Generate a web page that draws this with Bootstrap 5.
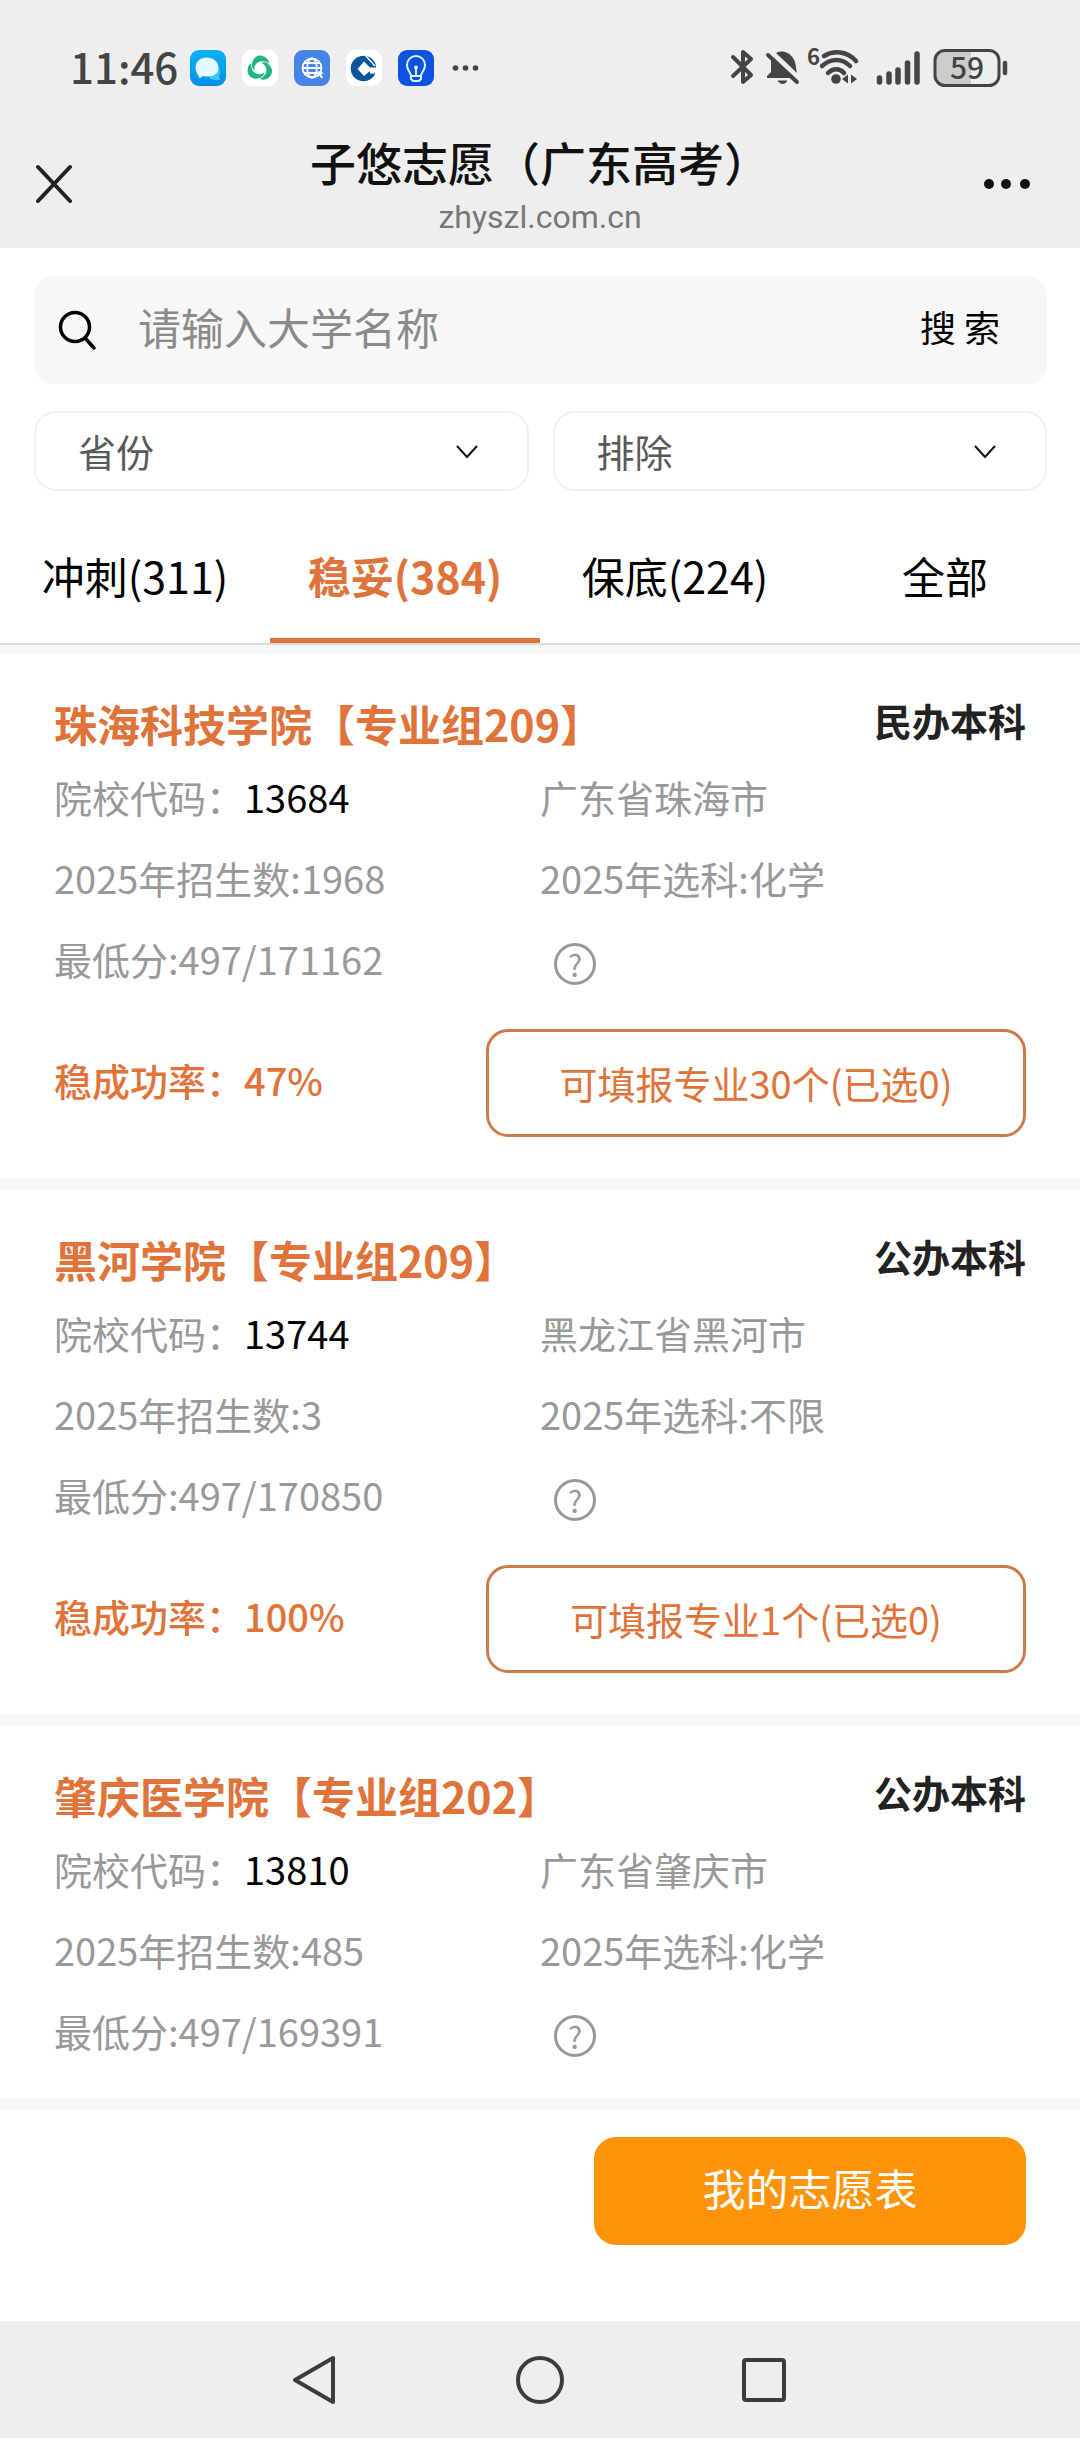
<!DOCTYPE html>
<html lang="zh-CN">
<head>
<meta charset="utf-8">
<meta name="viewport" content="width=device-width, initial-scale=1">
<title>子悠志愿（广东高考）</title>
<link rel="stylesheet" href="https://cdn.jsdelivr.net/npm/bootstrap@5.3.0/dist/css/bootstrap.min.css">
<style>
:root{--brand:#e0733a;--ink:#111;--muted:#999;--strip:#f7f7f7;--chrome:#eee}
body{font-family:"Noto Sans CJK SC","Noto Sans",sans-serif;font-size:38px;color:#000;background:#fff}
svg{display:block;flex:none}
/* phone status bar */
.chrome{background:var(--chrome)}
.statusbar{height:136px;padding:0 70px;color:#444}
.clock{font-size:42px;line-height:60px;padding-bottom:4px;font-weight:500}
.apps{gap:16px;margin-left:12px}
/* page title bar */
.titlebar{height:112px;padding:0 36px}
.page-title{font-size:46px;line-height:50px;font-weight:500;color:var(--ink)}
.page-host{font-size:32px;line-height:62px;color:#777;font-family:Roboto,"Noto Sans CJK SC",sans-serif}
.icon-btn{border:0;background:none;padding:0}
.side{width:60px}
/* search and filters */
.filters{padding:28px 33px 0 34px}
.searchbox{height:108px;border-radius:20px;background:var(--strip);padding:0 47px 0 24px}
.searchbox input{border:0;background:none;box-shadow:none;padding:0 0 8px 40px;font-size:43px;line-height:64px;color:#000}
.searchbox input:focus{background:none;box-shadow:none}
.searchbox input::placeholder{color:#8a8a8a;opacity:1}
.search-btn{font-size:36px;line-height:56px;padding-bottom:8px;color:#000}
.pickers{gap:24px;margin-top:27px}
.pickers .form-select{flex:1 1 0;height:80px;border:2px solid #f0f0f0;border-radius:22px;padding:0 80px 0 42px;font-size:38px;line-height:56px;color:#5a5a5a;
background-image:url("data:image/svg+xml,%3csvg xmlns='http://www.w3.org/2000/svg' viewBox='0 0 24 24'%3e%3cpath fill='none' stroke='%23111' stroke-width='2' d='M2 7l10 11 10-11'/%3e%3c/svg%3e");background-size:24px 24px;background-position:right 48px center}
/* tabs */
.level-tabs{height:154px;border-bottom:2px solid #ddd}
.level-tabs .nav-item{flex:1 1 0}
.level-tabs .nav-link{height:152px;padding:52px 0 0;font-size:43px;line-height:64px;color:#000;border-radius:0;border-bottom:5px solid transparent;white-space:nowrap}
.level-tabs .nav-link.active{color:var(--brand);font-weight:700;border-bottom-color:var(--brand)}
/* results */
.results{border-top:9px solid var(--strip)}
.school{padding:36px 54px 41px;border-bottom:12px solid var(--strip)}
.school-cut{padding-bottom:27px}
.school-name{font-size:43px;line-height:66px;font-weight:700;color:var(--brand);margin:0}
.school-kind{font-weight:700;color:#222;line-height:60px}
.fact{line-height:81px;color:var(--muted);white-space:nowrap}
.code{color:#000}
.help{width:42px;height:42px;margin:10px 0 0 14px;border:3px solid var(--muted);border-radius:50%;background:none;color:var(--muted);font-size:30px;line-height:36px;padding:0}
.actions{margin-top:30px}
.rate{color:var(--brand);font-weight:500;line-height:56px;padding-bottom:6px}
.pick-btn{width:540px;height:108px;border:3px solid #cd7a4c;border-radius:22px;color:var(--brand);font-size:38px;line-height:56px}
.school .row{--bs-gutter-x:0}
/* bottom */
.footer-actions{height:211px;padding:27px 54px 0}
.form-btn{width:432px;height:108px;border:0;border-radius:22px;background:#ff940a;color:#fff;font-size:43px;line-height:64px;padding:0 0 8px}
.sysnav{height:117px;gap:174px}
</style>
</head>
<body>
<header class="chrome">
  <div class="statusbar d-flex align-items-center justify-content-between">
    <div class="d-flex align-items-center">
      <span class="clock">11:46</span>
      <div class="apps d-flex align-items-center">
        <svg width="36" height="36" viewBox="0 0 36 36"><defs><linearGradient id="sky" x2="0" y2="1"><stop stop-color="#0ab0f5"/><stop offset="1" stop-color="#0091e8"/></linearGradient></defs><rect width="36" height="36" rx="9" fill="url(#sky)"/><path d="M24 24c3-1 5-4 4-8 3 4 2 8 1 10l1 4c-4 0-8 0-11-2z" fill="#3cc8fa"/><path d="M16.500 7.500C10 7.500 5.500 12 5.500 17.500c0 3 1 5 2 6.500l2 4c2 0 2-1 3-2 9 2 16-1 16-8.500 0-5.500-5-10-12-10z" fill="#e4f9ff"/></svg>
        <svg width="36" height="36" viewBox="0 0 36 36"><defs><path id="leaf" d="M10 13.500C11 7 17 4 22 6.500c3 1.500 5 4 5 7C23 10.500 18 10.500 15 13c-2 2-3 4-2.500 7.500C10 18.500 9.500 16 10 13.500z"/></defs><rect width="36" height="36" rx="9" fill="#fff"/><g fill="#24b47e"><use href="#leaf"/><use href="#leaf" transform="rotate(120 18 18.500)"/><use href="#leaf" transform="rotate(240 18 18.500)"/></g></svg>
        <svg width="36" height="36" viewBox="0 0 36 36"><rect width="36" height="36" rx="9" fill="#4584e6"/><g fill="none" stroke="#fff" stroke-width="1.800"><circle cx="18" cy="18" r="9.500"/><ellipse cx="18" cy="18" rx="4.800" ry="9.500"/><path d="M8.500 18h19M10 13h16M10 23h16"/></g><path d="M24 21l6 2-3 1.500 2 3-1.500 1-2-3-1.500 2z" fill="#fff"/></svg>
        <svg width="36" height="36" viewBox="0 0 36 36"><rect width="36" height="36" rx="9" fill="#fff"/><circle cx="17.500" cy="18.500" r="12.800" fill="#0b5597"/><path d="M18 11.500l6 6h11v3.500H24l-6 5-6.500-7z" fill="#fff"/><path d="M24 21h8l-1.500 2.500H24z" fill="#fff"/><path d="M19 5l10 11" stroke="#fff" stroke-width="1.400"/></svg>
        <svg width="36" height="36" viewBox="0 0 36 36"><rect width="36" height="36" rx="9" fill="#0d52e0"/><g fill="none" stroke="#d7f5ff" stroke-width="2" stroke-linejoin="round"><path d="M13 26c0-4-4-5-4-11a9 9 0 0 1 18 0c0 6-4 7-4 11zM13 26v3l2 2h6l2-2v-3M18 26v-8"/></g><circle cx="18" cy="17.500" r="2" fill="#d7f5ff"/></svg>
        <svg width="36" height="36" viewBox="0 0 36 36" fill="#444"><circle cx="5.500" cy="18" r="2.800"/><circle cx="15.500" cy="18" r="2.800"/><circle cx="25.500" cy="18" r="2.800"/></svg>
      </div>
    </div>
    <svg width="280" height="60" viewBox="0 -10 280 60" fill="none" stroke="#444" role="img" aria-label="59%">
      <path d="M3 9l18 18-8 7V4l8 7L3 28" stroke-width="4" stroke-linecap="round" stroke-linejoin="round"/>
      <path d="M46 5l21 20c-1-4-1-11-4-15-4-6-11-8-17-5zM41 10l20 20H37v-2l4-4z" fill="#444" stroke="none"/><path d="M38 7l29 27" stroke-width="4" stroke-linecap="round"/><path d="M48 33h9q-4 5-9 0z" fill="#444" stroke-width="1"/>
      <text x="77" y="17" font-size="22" font-weight="700" fill="#444" stroke="none" font-family="Noto Sans CJK SC">6</text>
      <g stroke-width="4.500" stroke-linecap="round"><path d="M94 8c10-6 23-5 32 5M92 18c9-8 20-8 28 0M98 25c5-5 12-5 16 0"/></g>
      <circle cx="106" cy="31" r="4.800" fill="#444" stroke="none"/><path d="M112 31l6-4.500v9zM127 31l-6-4.500v9z" fill="#444" stroke="none"/>
      <path d="M149.500 30v4M159 26v8M168 22v12M177.500 15v19M187 6v28" stroke-width="5.500" stroke-linecap="round"/>
      <path d="M214 4h27v32h-27q-9 0-9-9V13q0-9 9-9z" fill="#ccc" stroke="none"/>
      <rect x="205" y="2.500" width="64" height="35" rx="10" stroke-width="3"/>
      <path d="M275 15v10" stroke-width="4.500" stroke-linecap="round"/>
      <text x="237" y="31" text-anchor="middle" font-size="30" font-weight="500" fill="#444" stroke="none" font-family="Noto Sans CJK SC">59</text>
    </svg>
  </div>
  <div class="titlebar d-flex align-items-start justify-content-between">
    <button class="icon-btn side" type="button" aria-label="关闭"><svg width="36" height="96" viewBox="0 0 36 96"><path d="M2 31l32 34M34 31L2 65" stroke="#222" stroke-width="4" stroke-linecap="round"/></svg></button>
    <div class="text-center">
      <h1 class="page-title m-0">子悠志愿（广东高考）</h1>
      <div class="page-host">zhyszl.com.cn</div>
    </div>
    <button class="icon-btn side" type="button" aria-label="更多"><svg width="60" height="96" viewBox="0 0 60 96" fill="#111"><circle cx="5" cy="48" r="5"/><circle cx="22" cy="48" r="5"/><circle cx="41" cy="48" r="5"/></svg></button>
  </div>
</header>

<main>
  <section class="filters">
    <form class="searchbox d-flex align-items-center">
      <svg width="40" height="42" viewBox="0 0 40 42" fill="none" stroke="#000" stroke-width="3.500" stroke-linecap="round"><circle cx="17" cy="18" r="14.500"/><path d="M27 29l9 10"/></svg>
      <input class="form-control" type="search" placeholder="请输入大学名称" aria-label="请输入大学名称">
      <button class="icon-btn search-btn text-nowrap" type="submit">搜 索</button>
    </form>
    <div class="pickers d-flex">
      <select class="form-select" aria-label="省份"><option>省份</option></select>
      <select class="form-select" aria-label="排除"><option>排除</option></select>
    </div>
  </section>

  <ul class="nav level-tabs text-center flex-nowrap">
    <li class="nav-item"><a class="nav-link" href="#">冲刺(311)</a></li>
    <li class="nav-item"><a class="nav-link active" aria-current="page" href="#">稳妥(384)</a></li>
    <li class="nav-item"><a class="nav-link" href="#">保底(224)</a></li>
    <li class="nav-item"><a class="nav-link" href="#">全部</a></li>
  </ul>

  <section class="results">
    <article class="school">
      <div class="d-flex justify-content-between">
        <h2 class="school-name">珠海科技学院【专业组209】</h2><span class="school-kind">民办本科</span>
      </div>
      <div class="row">
        <div class="col-6 fact">院校代码：<span class="code">13684</span></div><div class="col-6 fact">广东省珠海市</div>
        <div class="col-6 fact">2025年招生数:1968</div><div class="col-6 fact">2025年选科:化学</div>
        <div class="col-6 fact">最低分:497/171162</div><div class="col-6 d-flex align-items-center"><button class="help" type="button">?</button></div>
      </div>
      <div class="actions d-flex align-items-center justify-content-between">
        <span class="rate">稳成功率：47%</span><button class="btn pick-btn" type="button">可填报专业30个(已选0)</button>
      </div>
    </article>
    <article class="school">
      <div class="d-flex justify-content-between">
        <h2 class="school-name">黑河学院【专业组209】</h2><span class="school-kind">公办本科</span>
      </div>
      <div class="row">
        <div class="col-6 fact">院校代码：<span class="code">13744</span></div><div class="col-6 fact">黑龙江省黑河市</div>
        <div class="col-6 fact">2025年招生数:3</div><div class="col-6 fact">2025年选科:不限</div>
        <div class="col-6 fact">最低分:497/170850</div><div class="col-6 d-flex align-items-center"><button class="help" type="button">?</button></div>
      </div>
      <div class="actions d-flex align-items-center justify-content-between">
        <span class="rate">稳成功率：100%</span><button class="btn pick-btn" type="button">可填报专业1个(已选0)</button>
      </div>
    </article>
    <article class="school school-cut">
      <div class="d-flex justify-content-between">
        <h2 class="school-name">肇庆医学院【专业组202】</h2><span class="school-kind">公办本科</span>
      </div>
      <div class="row">
        <div class="col-6 fact">院校代码：<span class="code">13810</span></div><div class="col-6 fact">广东省肇庆市</div>
        <div class="col-6 fact">2025年招生数:485</div><div class="col-6 fact">2025年选科:化学</div>
        <div class="col-6 fact">最低分:497/169391</div><div class="col-6 d-flex align-items-center"><button class="help" type="button">?</button></div>
      </div>
    </article>
  </section>

  <div class="footer-actions d-flex justify-content-end align-items-start">
    <button class="btn form-btn" type="button">我的志愿表</button>
  </div>
</main>

<nav class="sysnav chrome d-flex justify-content-center align-items-center" aria-label="系统导航">
  <button class="icon-btn" type="button" aria-label="返回"><svg width="50" height="50" viewBox="0 0 50 50" fill="none" stroke="#3c3c3c" stroke-width="4" stroke-linejoin="round"><path d="M42 3v44L4 25z"/></svg></button>
  <button class="icon-btn" type="button" aria-label="主页"><svg width="50" height="50" viewBox="0 0 50 50" fill="none" stroke="#3c3c3c" stroke-width="4"><circle cx="25" cy="25" r="22"/></svg></button>
  <button class="icon-btn" type="button" aria-label="最近任务"><svg width="50" height="50" viewBox="0 0 50 50" fill="none" stroke="#3c3c3c" stroke-width="4"><rect x="5" y="5" width="40" height="40" rx="2"/></svg></button>
</nav>
<script src="https://cdn.jsdelivr.net/npm/bootstrap@5.3.0/dist/js/bootstrap.bundle.min.js"></script>
</body>
</html>
